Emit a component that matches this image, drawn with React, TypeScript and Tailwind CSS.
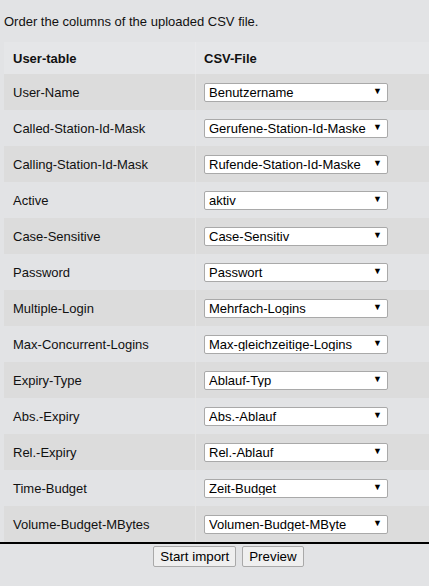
const rows: [string, string][] = [
  ['User-Name', 'Benutzername'],
  ['Called-Station-Id-Mask', 'Gerufene-Station-Id-Maske'],
  ['Calling-Station-Id-Mask', 'Rufende-Station-Id-Maske'],
  ['Active', 'aktiv'],
  ['Case-Sensitive', 'Case-Sensitiv'],
  ['Password', 'Passwort'],
  ['Multiple-Login', 'Mehrfach-Logins'],
  ['Max-Concurrent-Logins', 'Max-gleichzeitige-Logins'],
  ['Expiry-Type', 'Ablauf-Typ'],
  ['Abs.-Expiry', 'Abs.-Ablauf'],
  ['Rel.-Expiry', 'Rel.-Ablauf'],
  ['Time-Budget', 'Zeit-Budget'],
  ['Volume-Budget-MBytes', 'Volumen-Budget-MByte'],
];

const App = () => {
  return (
    <div className="min-h-[586px] w-[429px] bg-[#e2e3e5] font-['Liberation_Sans',Arial,sans-serif] text-[13px] text-[#111]">
      <p className="h-[42px] pl-[4px] pt-[14px] leading-[16px]">Order the columns of the uploaded CSV file.</p>

      <div className="ml-[4px]">
        {/* header */}
        <div className="flex h-[32px] bg-[#e5e6e8] font-bold">
          <div className="flex w-[192px] items-center border-r border-[#e9e9eb] pl-[9px] pt-[1px]">User-table</div>
          <div className="flex flex-1 items-center pl-[8px] pt-[1px]">CSV-File</div>
        </div>

        {rows.map(([label, value], i) => (
          <div key={label} className={`flex h-[36px] ${i % 2 === 0 ? 'bg-[#dcdcdc]' : 'bg-[#e2e3e5]'}`}>
            <div className="flex w-[192px] items-center border-r border-[#e5e5e5] pl-[9px] pt-[1px]">{label}</div>
            <div className="flex flex-1 items-center pl-[8px]">
              <div className="relative flex h-[19px] w-[184px] items-center rounded-[2px] border border-[#a9a9a9] bg-white pl-[4px] text-[13px] leading-none text-black">
                <span className="truncate pr-[14px]">{value}</span>
                <span className="absolute right-[5px] top-[3px] text-[9px] leading-none">▼</span>
              </div>
            </div>
          </div>
        ))}
      </div>

      <div className="h-[2px] w-full bg-black" />

      <div className="flex justify-center gap-[6px] pt-[2px] pl-[28px]">
        <button className="h-[21px] rounded-[2px] border border-[#a9a9a9] bg-[#efefef] px-[6px] text-[13.33px] leading-none text-black">
          Start import
        </button>
        <button className="h-[21px] rounded-[2px] border border-[#a9a9a9] bg-[#efefef] px-[6px] text-[13.33px] leading-none text-black">
          Preview
        </button>
      </div>
    </div>
  );
};

export default App;
